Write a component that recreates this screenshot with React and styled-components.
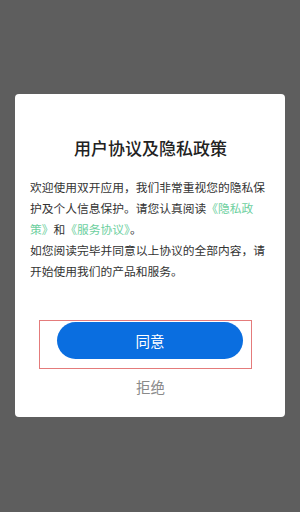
import React from "react";
import styled, { createGlobalStyle } from "styled-components";

const Global = createGlobalStyle`
  html, body { margin: 0; padding: 0; }
  body {
    background: #5e5e5e;
    font-family: "Noto Sans CJK SC", "Noto Sans", sans-serif;
  }
`;

const Page = styled.div`
  width: 300px;
  height: 512px;
  background: #5e5e5e;
  padding: 94px 15px 0;
  box-sizing: border-box;
`;

const Card = styled.div`
  background: #ffffff;
  border-radius: 4px;
  height: 323px;
  box-sizing: border-box;
  padding: 42px 14px 0 15px;
  display: flex;
  flex-direction: column;
`;

const Title = styled.h1`
  margin: 0;
  font-size: 17px;
  line-height: 24px;
  font-weight: 500;
  color: #222;
  text-align: center;
`;

const Body = styled.div`
  margin-top: 16px;
  font-size: 11.75px;
  line-height: 21px;
  color: #333;
`;

const Para = styled.p`
  margin: 0;
`;

const Link = styled.span`
  color: #6dcf9e;
`;

const Highlight = styled.div`
  align-self: flex-start;
  margin-top: 39px;
  margin-left: 9px;
  border: 1px solid #e47b7b;
  padding: 1px 8px 9px 17px;
`;

const Agree = styled.button`
  width: 186px;
  height: 37px;
  border: none;
  border-radius: 19px;
  background: #0a6ee0;
  color: #fff;
  font-family: inherit;
  font-size: 14.5px;
  display: flex;
  align-items: center;
  justify-content: center;
  padding: 0;
`;

const Refuse = styled.div`
  margin-top: 8px;
  text-align: center;
  font-size: 14.5px;
  line-height: 20px;
  color: #8a8a8a;
`;

export default function App() {
  return (
    <>
      <Global />
      <Page>
        <Card>
          <Title>用户协议及隐私政策</Title>
          <Body>
            <Para>
              欢迎使用双开应用，我们非常重视您的隐私保护及个人信息保护。请您认真阅读<Link>《隐私政</Link>
              <br />
              <Link>策》</Link>和<Link>《服务协议》</Link>。
            </Para>
            <Para>如您阅读完毕并同意以上协议的全部内容，请开始使用我们的产品和服务。</Para>
          </Body>
          <Highlight>
            <Agree>同意</Agree>
          </Highlight>
          <Refuse>拒绝</Refuse>
        </Card>
      </Page>
    </>
  );
}
